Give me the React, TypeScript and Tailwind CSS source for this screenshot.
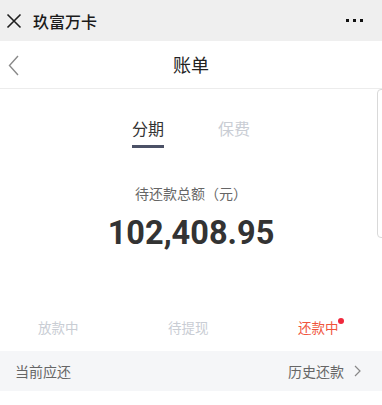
import React from "react";

const cjk = { fontFamily: '"Noto Sans CJK SC", "Noto Sans", sans-serif' };

const App = () => {
  return (
    <div className="relative h-[405px] w-[382px] overflow-hidden bg-white" style={cjk}>
      {/* wechat top bar */}
      <div className="flex h-[41px] items-center bg-[#efefef] pl-[6px] pr-[19px]">
        <svg width="16" height="16" viewBox="0 0 16 16" className="mr-[11px]">
          <path d="M1.5 1.5 L14.5 14.5 M14.5 1.5 L1.5 14.5" stroke="#1f1f1f" strokeWidth="1.6" fill="none" />
        </svg>
        <span className="text-[16px] font-medium text-[#1b1b1b]">玖富万卡</span>
        <div className="ml-auto flex gap-[4px]">
          <span className="h-[3px] w-[3px] bg-[#111]" />
          <span className="h-[3px] w-[3px] bg-[#111]" />
          <span className="h-[3px] w-[3px] bg-[#111]" />
        </div>
      </div>

      {/* page header */}
      <div className="relative flex h-[48px] items-center justify-center border-b border-[#ececec]">
        <svg width="12" height="22" viewBox="0 0 12 22" className="absolute left-[8px] top-[14px]">
          <path d="M10 1 L1.5 10.5 L10 20" stroke="#8a8a8a" strokeWidth="1.4" fill="none" />
        </svg>
        <span className="text-[18px] text-[#222]">账单</span>
      </div>

      <div className="absolute right-[-6px] top-[89px] h-[149px] w-[11px] rounded-l-[4px] border border-[#d9d9d9]" />

      {/* tabs */}
      <div className="mt-[27px] flex justify-center gap-[54px]">
        <div className="flex flex-col items-center">
          <span className="text-[16px] leading-[24px] text-[#333]">分期</span>
          <span className="mt-[5px] h-[3px] w-[32px] bg-[#4b5166]" />
        </div>
        <span className="text-[16px] leading-[24px] text-[#c9cdd4]">保费</span>
      </div>

      {/* amount */}
      <div className="mt-[35px] flex flex-col items-center">
        <span className="text-[14px] leading-[20px] text-[#666]">待还款总额（元）</span>
        <span
          className="mt-[12px] text-[32.5px] font-bold leading-[36px] text-[#333]"
          style={{ fontFamily: "Roboto, sans-serif" }}
        >
          102,408.95
        </span>
      </div>

      {/* status tabs */}
      <div className="mt-[66px] flex gap-[89.5px] pl-[38px] text-[13.5px] leading-[20px]">
        <span className="text-[#c9cdd4]">放款中</span>
        <span className="text-[#c9cdd4]">待提现</span>
        <span className="relative text-[#f0553d]">
          还款中
          <span className="absolute right-[-5px] top-[1px] h-[6px] w-[6px] rounded-full bg-[#f0283c]" />
        </span>
      </div>

      {/* current row */}
      <div className="mt-[14px] flex h-[40px] items-center justify-between bg-[#f5f6f8] pl-[15px] pr-[21px] text-[14px] text-[#666]">
        <span>当前应还</span>
        <div className="flex items-center gap-[10px]">
          <span>历史还款</span>
          <svg width="7" height="12" viewBox="0 0 7 12">
            <path d="M1 1 L6 6 L1 11" stroke="#888" strokeWidth="1.2" fill="none" />
          </svg>
        </div>
      </div>
    </div>
  );
};

export default App;
